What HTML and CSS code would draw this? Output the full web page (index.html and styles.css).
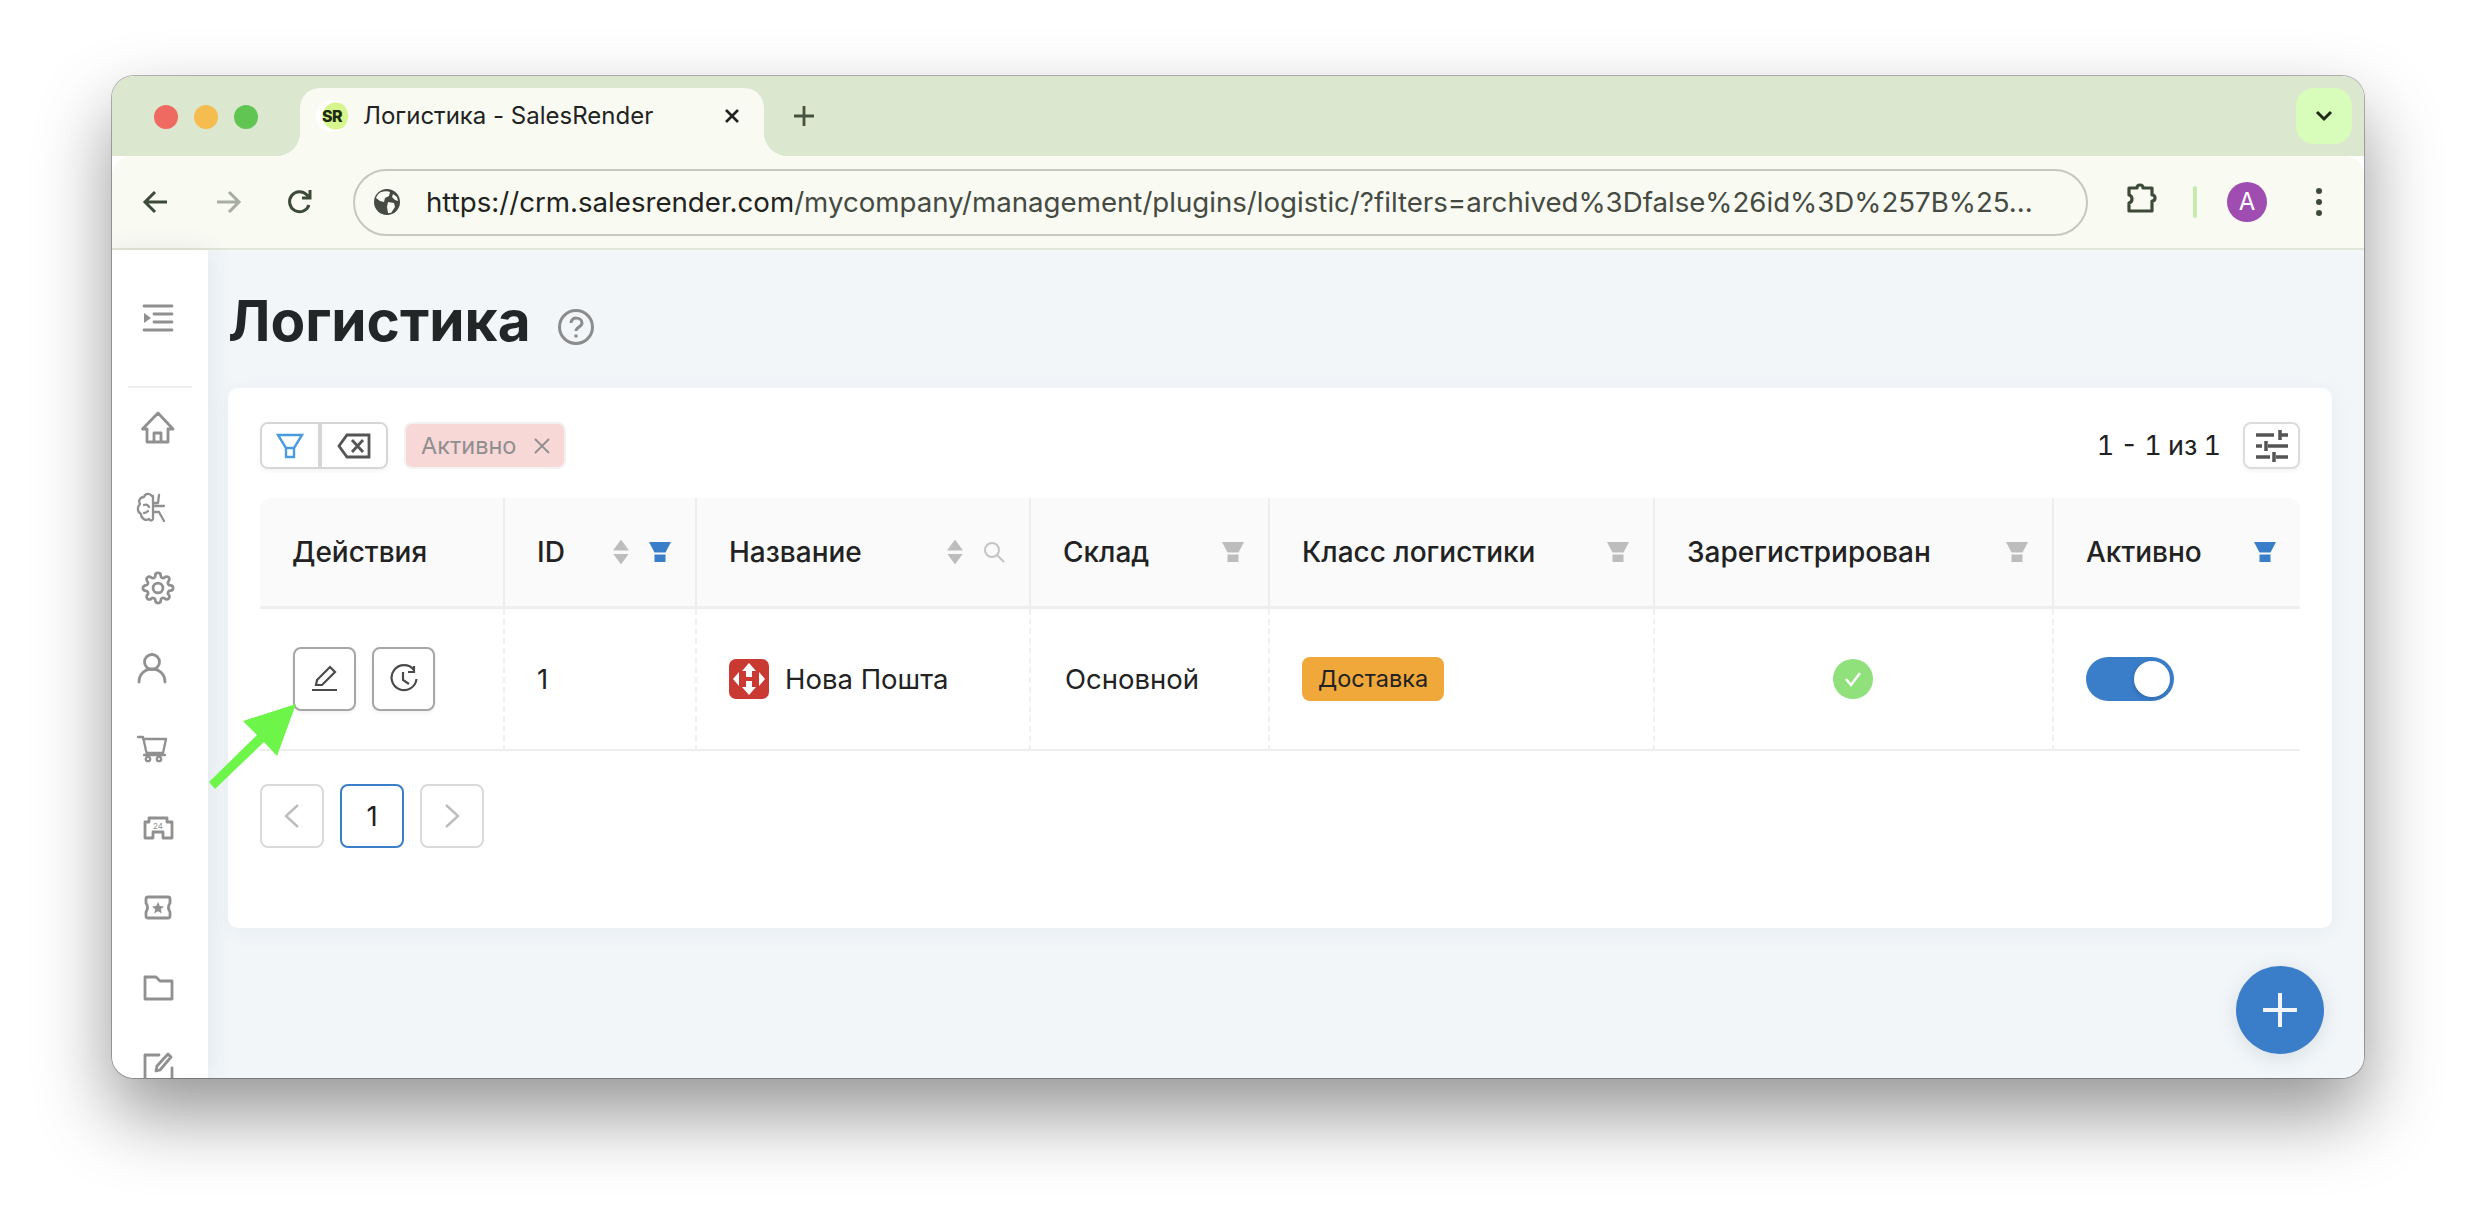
FILE: index.html
```html
<!DOCTYPE html>
<html>
<head>
  <title>Логистика - SalesRender</title>
  <link rel="stylesheet" href="styles.css">
</head>
<body>
  <div class="window">
    <div class="tabStrip">
      <div class="lights">
        <span class="light red"></span>
        <span class="light yellow"></span>
        <span class="light green"></span>
      </div>
      <div class="tab">
        <span class="favicon">SR</span>
        <span class="tabTitle">Логистика - SalesRender</span>
        <svg class="tabClose" width="20" height="20" viewBox="0 0 20 20"><path d="M4 4 L16 16 M16 4 L4 16"/></svg>
      </div>
      <svg class="newTab" width="24" height="24" viewBox="0 0 24 24"><path d="M12 2 V22 M2 12 H22"/></svg>
      <div class="tabMenu">
        <svg width="24" height="24" viewBox="0 0 24 24"><path d="M5 8 L12 15 L19 8"/></svg>
      </div>
    </div>

    <div class="toolbar">
      <svg class="navIcon back" width="32" height="32" viewBox="0 0 32 32"><path d="M27 16 H5 M15 6 L5 16 L15 26"/></svg>
      <svg class="navIcon forward" width="32" height="32" viewBox="0 0 32 32"><path d="M5 16 H27 M17 6 L27 16 L17 26"/></svg>
      <svg class="navIcon reload" width="32" height="32" viewBox="0 0 32 32"><path d="M25 19 A10 10 0 1 1 23 9 L26 12 M26 4 V12 H18"/></svg>
      <div class="addressBar">
        <svg class="globe" width="28" height="28" viewBox="0 0 28 28">
          <circle cx="14" cy="14" r="13" fill="#454a42"/>
          <path d="M8 4 C11 3 15 3 17 4 L16 8 L12 10 L11 14 L7 13 L3 10 C4 7 6 5 8 4 Z M15 14 L21 15 L22 19 L18 25 L15 25 L14 19 Z M20 6 L24 9 L25 13 L22 12 L19 9 Z" fill="#f9faf2"/>
        </svg>
        <span class="url"><span class="urlHost">https://crm.salesrender.com</span>/mycompany/management/plugins/logistic/?filters=archived%3Dfalse%26id%3D%257B%25...</span>
      </div>
      <svg class="puzzle" width="36" height="36" viewBox="0 0 36 36"><path d="M5 6 H13 C13 2 19 2 19 6 H28 V13 C32 13 32 19 28 19 V29 H5 V21 C9 20 9 14 5 13 Z"/></svg>
      <span class="toolbarSep"></span>
      <span class="avatar">A</span>
      <div class="kebab"><span></span><span></span><span></span></div>
    </div>

    <div class="main">
      <div class="sidebar">
        <div class="sideToggle">
          <svg width="48" height="48" viewBox="0 0 48 48" class="sideIcon"><path d="M10 12 H38 M20 20 H38 M20 28 H38 M10 36 H38"/><path class="solid" d="M10 19 L17 24 L10 29 Z"/></svg>
        </div>
        <div class="sideItem"><svg width="48" height="48" viewBox="0 0 48 48" class="sideIcon"><path d="M24 9 L8.5 25 H13 V38 H34 V25 H39 Z M20 38 V29 H27 V38"/></svg></div>
        <div class="sideItem"><svg width="48" height="48" viewBox="0 0 48 48" class="sideIcon thin"><path d="M18 12 C16 9 11 9 10 13 C6 13 4 17 6 20 C3 23 3 28 7 30 C7 35 12 37 15 35 C16 37 18 37 19 35 V12 M10 21 C12 20 14 21 15 23 M10 29 C12 29 13 28 14 27 M19 19 L24 19 L25 11 M19 22 H30 M19 28 H25 L30 37"/></svg></div>
        <div class="sideItem"><svg width="48" height="48" viewBox="-5.5 -5.5 35 35" class="sideIcon gear"><circle cx="12" cy="12" r="3.6"/><path d="M19.4 15a1.65 1.65 0 0 0 .33 1.82l.06.06a2 2 0 0 1 0 2.83 2 2 0 0 1-2.83 0l-.06-.06a1.65 1.65 0 0 0-1.82-.33 1.65 1.65 0 0 0-1 1.51V21a2 2 0 0 1-2 2 2 2 0 0 1-2-2v-.09A1.65 1.65 0 0 0 9 19.4a1.65 1.65 0 0 0-1.82.33l-.06.06a2 2 0 0 1-2.83 0 2 2 0 0 1 0-2.83l.06-.06a1.65 1.65 0 0 0 .33-1.82 1.65 1.65 0 0 0-1.51-1H3a2 2 0 0 1-2-2 2 2 0 0 1 2-2h.09A1.65 1.65 0 0 0 4.6 9a1.65 1.65 0 0 0-.33-1.82l-.06-.06a2 2 0 0 1 0-2.83 2 2 0 0 1 2.83 0l.06.06a1.65 1.65 0 0 0 1.82.33H9a1.65 1.65 0 0 0 1-1.51V3a2 2 0 0 1 2-2 2 2 0 0 1 2 2v.09a1.65 1.65 0 0 0 1 1.51 1.65 1.65 0 0 0 1.82-.33l.06-.06a2 2 0 0 1 2.83 0 2 2 0 0 1 0 2.83l-.06.06a1.65 1.65 0 0 0-.33 1.82V9a1.65 1.65 0 0 0 1.51 1H21a2 2 0 0 1 2 2 2 2 0 0 1-2 2h-.09a1.65 1.65 0 0 0-1.51 1z"/></svg></div>
        <div class="sideItem"><svg width="48" height="48" viewBox="0 0 48 48" class="sideIcon"><circle cx="18" cy="18" r="7.5"/><path d="M5 38 C5 30 11 25 18 25 C25 25 31 30 31 38"/></svg></div>
        <div class="sideItem"><svg width="48" height="48" viewBox="0 0 48 48" class="sideIcon thin"><path d="M4 13 H9 L13 31 M10 31 H31 M9 15 H32 L29 29 H13"/><circle cx="14" cy="35" r="2.2"/><circle cx="25" cy="35" r="2.2"/></svg></div>
        <div class="sideItem"><svg width="48" height="48" viewBox="0 0 48 48" class="sideIcon"><path d="M15 14 H33 V18 H38 V34 H29 V28 H19 V34 H11 V18 H15 Z"/><text class="iconText" x="24" y="24.5">24</text></svg></div>
        <div class="sideItem"><svg width="48" height="48" viewBox="0 0 48 48" class="sideIcon"><path d="M14 13 H34 a2 2 0 0 1 2 2 V19 Q33 23.5 36 28 V32 a2 2 0 0 1 -2 2 H14 a2 2 0 0 1 -2 -2 V28 Q15 23.5 12 19 V15 a2 2 0 0 1 2 -2 Z"/><path class="solid" d="M24 18 L25.8 22 L30 22.4 L26.8 25.2 L27.8 29.5 L24 27.2 L20.2 29.5 L21.2 25.2 L18 22.4 L22.2 22 Z"/></svg></div>
        <div class="sideItem"><svg width="48" height="48" viewBox="0 0 48 48" class="sideIcon"><path d="M11 13 H22 L26 17 H38 V35 H11 Z"/></svg></div>
        <div class="sideItem"><svg width="48" height="48" viewBox="0 0 48 48" class="sideIcon"><path d="M25 11 H11 V38 H38 V24 M26 26 L37 13 L34 10 L23 22 L22 27 Z"/></svg></div>
      </div>

      <div class="content">
        <div class="pageHead">
          <h1>Логистика</h1>
          <svg class="help" width="38" height="38" viewBox="0 0 38 38">
            <circle cx="19" cy="19" r="16.5"/>
            <path d="M14 15 C14 8 25 9 25 15 C25 19 19 19 19 23"/>
            <circle class="dot" cx="19" cy="28" r="1.8"/>
          </svg>
        </div>

        <div class="card">
          <div class="cardTop">
            <div class="filterGroup">
              <button class="filterBtn">
                <svg width="30" height="30" viewBox="0 0 30 30"><path d="M3 4 H27 L19 17 V26 H11 V17 Z M11 17 H19"/></svg>
              </button>
              <button class="filterBtn clear">
                <svg width="34" height="26" viewBox="0 0 34 26"><path d="M10 2 H32 V24 H10 L2 13 Z M15 7 L26 19 M26 7 L15 19"/></svg>
              </button>
            </div>
            <div class="filterTag">
              <span>Активно</span>
              <svg width="18" height="18" viewBox="0 0 18 18"><path d="M2 2 L16 16 M16 2 L2 16"/></svg>
            </div>
            <div class="counter">1 - 1 из 1</div>
            <button class="columnsBtn">
              <svg width="34" height="34" viewBox="0 0 34 34"><path d="M1 6 H19 M25 6 H33 M25 1 V11 M1 17 H7 M13 17 H33 M11 12 V22 M1 28 H15 M21 28 H33 M19 23 V33"/></svg>
            </button>
          </div>

          <table class="grid">
            <thead>
              <tr>
                <th class="colActions"><div class="thIn"><span>Действия</span></div></th>
                <th class="colId"><div class="thIn"><span>ID</span><i class="thTools"><i class="sort"></i><i class="funnel on"></i></i></div></th>
                <th class="colName"><div class="thIn"><span>Название</span><i class="thTools"><i class="sort"></i>
                  <svg class="search" width="22" height="22" viewBox="0 0 22 22"><circle cx="9" cy="9" r="7"/><path d="M14 14 L21 21"/></svg></i></div></th>
                <th class="colStore"><div class="thIn"><span>Склад</span><i class="funnel"></i></div></th>
                <th class="colClass"><div class="thIn"><span>Класс логистики</span><i class="funnel"></i></div></th>
                <th class="colReg"><div class="thIn"><span>Зарегистрирован</span><i class="funnel"></i></div></th>
                <th class="colActive"><div class="thIn"><span>Активно</span><i class="funnel on"></i></div></th>
              </tr>
            </thead>
            <tbody>
              <tr>
                <td class="actionsCell">
                  <div class="actions">
                    <button class="actionBtn">
                      <svg width="28" height="28" viewBox="0 0 28 28"><path d="M1 25 H26 M5 20 L6 15 L19 2 L24 7 L11 20 Z"/></svg>
                    </button>
                    <button class="actionBtn">
                      <svg width="30" height="30" viewBox="0 0 30 30"><path d="M25 6 A12.5 12.5 0 1 0 27.5 15 M25 2 V8 H19 M14 8 V16 L20 20"/></svg>
                    </button>
                  </div>
                </td>
                <td>1</td>
                <td>
                  <div class="nameCell">
                    <svg class="novaLogo" width="40" height="40" viewBox="0 0 40 40">
                      <rect width="40" height="40" rx="7" fill="#c93a33"/>
                      <path d="M20 4 L27 12 H23 V18 H17 V12 H13 Z M20 36 L13 28 H17 V22 H23 V28 H27 Z M4 20 L10 13 V27 Z M36 20 L30 13 V27 Z" fill="#fff"/>
                    </svg>
                    Нова Пошта
                  </div>
                </td>
                <td class="storeCell">Основной</td>
                <td><span class="classTag">Доставка</span></td>
                <td class="regCell">
                  <svg width="40" height="40" viewBox="0 0 40 40"><circle cx="20" cy="20" r="20" fill="#90e07c"/><path d="M13 20 L18 26 L27 14" fill="none" stroke="#fff" stroke-width="2.5"/></svg>
                </td>
                <td><span class="toggle"><span class="knob"></span></span></td>
              </tr>
            </tbody>
          </table>

          <div class="pager">
            <button class="pageBtn">
              <svg width="18" height="28" viewBox="0 0 18 28"><path d="M15 3 L3 14 L15 25"/></svg>
            </button>
            <button class="pageBtn current">1</button>
            <button class="pageBtn">
              <svg width="18" height="28" viewBox="0 0 18 28"><path d="M3 3 L15 14 L3 25"/></svg>
            </button>
          </div>
        </div>

        <button class="fab">
          <svg width="36" height="36" viewBox="0 0 36 36"><path d="M18 1 V35 M1 18 H35"/></svg>
        </button>
      </div>
    </div>

    <svg class="pointer" width="100" height="100" viewBox="0 0 100 100"><path d="M92 3 L39 20 L53 34 L5 81 L11 88 L60 41 L73 55 Z"/></svg>
  </div>
</body>
</html>
```

FILE: styles.css
```css
* {
  box-sizing: border-box;
}

html, body {
  margin: 0;
  height: 100%;
}

body {
  background: #fff;
  padding: 76px 112px 148px;
  font-family: Inter, "Noto Sans", sans-serif;
  color: #222;
  overflow: hidden;
}

button {
  font-family: inherit;
  background: #fff;
  padding: 0;
}

.window {
  position: relative;
  height: 1002px;
  display: flex;
  flex-direction: column;
  border-radius: 22px;
  overflow: hidden;
}

/* outer shadow sits on a wrapper-free pseudo layer */
body::before {
  content: "";
  position: absolute;
  left: 112px;
  top: 76px;
  width: 2252px;
  height: 1002px;
  border-radius: 22px;
  box-shadow: 0 0 0 1px rgba(0, 0, 0, 0.28), 0 36px 75px rgba(0, 0, 0, 0.42);
}

/* tab strip */
.tabStrip {
  height: 80px;
  flex: none;
  display: flex;
  background: #dce7d0;
  padding-top: 12px;
  position: relative;
}

.lights {
  width: 188px;
  display: flex;
  gap: 16px;
  padding: 17px 0 0 42px;
}

.light {
  width: 24px;
  height: 24px;
  border-radius: 50%;
}

.red { background: #ef6a60; }
.yellow { background: #f5bd4f; }
.green { background: #61c554; }

.tab {
  position: relative;
  width: 464px;
  height: 68px;
  background: #f9faf2;
  border-radius: 20px 20px 0 0;
  display: flex;
  align-items: flex-start;
  padding: 12px 0 0 16px;
}

.tab::before,
.tab::after {
  content: "";
  position: absolute;
  bottom: 0;
  width: 24px;
  height: 24px;
}

.tab::before {
  left: -24px;
  background: radial-gradient(circle at 0 0, transparent 24px, #f9faf2 24.5px);
}

.tab::after {
  right: -24px;
  background: radial-gradient(circle at 100% 0, transparent 24px, #f9faf2 24.5px);
}

.favicon {
  width: 32px;
  height: 32px;
  border-radius: 50%;
  background: radial-gradient(circle at 62% 50%, #d6f58c 0, #d6f58c 13px, #fff 14px);
  font-size: 16px;
  font-weight: 800;
  line-height: 32px;
  text-align: center;
  color: #1c2a12;
  letter-spacing: -0.5px;
}

.tabTitle {
  margin-left: 15px;
  width: 359px;
  font-size: 24px;
  line-height: 32px;
  color: #222;
  white-space: nowrap;
}

.tabClose {
  margin-top: 6px;
  fill: none;
  stroke: #222;
  stroke-width: 2.6;
}

.newTab {
  margin: 16px 0 0 28px;
  fill: none;
  stroke: #46523f;
  stroke-width: 2.8;
}

.tabMenu {
  position: absolute;
  right: 12px;
  top: 12px;
  width: 56px;
  height: 56px;
  border-radius: 18px;
  background: #d8fdbb;
  display: flex;
  align-items: center;
  justify-content: center;
}

.tabMenu svg {
  fill: none;
  stroke: #1e2a18;
  stroke-width: 3;
}

/* address row */
.toolbar {
  height: 94px;
  flex: none;
  display: flex;
  align-items: center;
  background: #f9faf2;
  border-bottom: 2px solid #e2e6d8;
  border-radius: 20px 20px 0 0;
  padding: 0 0 0 28px;
  position: relative;
}

.navIcon {
  fill: none;
  stroke: #3e4a38;
  stroke-width: 3;
  flex: none;
}

.forward {
  margin-left: 40px;
  stroke: #a8ada2;
}

.reload {
  margin-left: 40px;
}

.addressBar {
  width: 1735px;
  height: 67px;
  margin-left: 37px;
  border: 2px solid #c6c8bc;
  border-radius: 34px;
  display: flex;
  align-items: center;
  padding-left: 18px;
  flex: none;
}

.url {
  margin-left: 25px;
  font-size: 27.65px;
  color: #454a42;
  white-space: nowrap;
}

.urlHost {
  color: #1f2320;
}

.puzzle {
  margin-left: 36px;
  margin-top: -4px;
  fill: none;
  stroke: #3e4a38;
  stroke-width: 3.2;
  stroke-linejoin: round;
  flex: none;
}

.toolbarSep {
  width: 4px;
  height: 32px;
  margin-left: 33px;
  border-radius: 2px;
  background: #c4ecaa;
  flex: none;
}

.avatar {
  width: 40px;
  height: 40px;
  margin-left: 30px;
  border-radius: 50%;
  background: #9f4db0;
  color: #fff;
  font-size: 24px;
  line-height: 40px;
  text-align: center;
  flex: none;
}

.kebab {
  margin-left: 49px;
  display: flex;
  flex-direction: column;
  gap: 5px;
}

.kebab span {
  width: 6px;
  height: 6px;
  border-radius: 50%;
  background: #3e4a38;
}

/* page */
.main {
  flex: 1;
  min-height: 0;
  display: flex;
}

.sidebar {
  width: 96px;
  flex: none;
  background: #fff;
  box-shadow: 0 0 24px rgba(60, 80, 100, 0.1);
  overflow: hidden;
  position: relative;
  z-index: 1;
}

.sideToggle {
  height: 138px;
  padding: 44px 0 0 22px;
  position: relative;
}

.sideToggle::after {
  content: "";
  position: absolute;
  left: 16px;
  width: 64px;
  bottom: 0;
  height: 2px;
  background: #eee;
}

.sideItem {
  height: 80px;
  padding: 16px 0 0 22px;
}

.sideIcon {
  display: block;
  fill: none;
  stroke: #909090;
  stroke-width: 2.8;
  stroke-linecap: round;
  stroke-linejoin: round;
}

.sideIcon .solid {
  fill: #909090;
  stroke: none;
}

.sideIcon.thin {
  stroke-width: 2.3;
}

.iconText {
  font-size: 8px;
  fill: #909090;
  stroke: none;
  text-anchor: middle;
}

.gear {
  stroke-width: 2;
}

.content {
  flex: 1;
  min-width: 0;
  position: relative;
  background: #f2f6f9;
  padding: 0 32px 0 20px;
}

.pageHead {
  height: 138px;
  display: flex;
  align-items: center;
  padding-top: 2px;
}

h1 {
  margin: 0;
  font-size: 56.7px;
  font-weight: 700;
  color: #232626;
}

.help {
  margin: 14px 0 0 26px;
  fill: none;
  stroke: #8c8c8c;
  stroke-width: 3;
}

.help .dot {
  fill: #8c8c8c;
  stroke: none;
}

.card {
  height: 540px;
  background: #fff;
  border-radius: 10px;
  padding: 34px 32px 0;
  box-shadow: 0 4px 20px rgba(60, 80, 100, 0.06);
}

.cardTop {
  height: 47px;
  display: flex;
  align-items: center;
  margin-bottom: 29px;
}

.filterGroup {
  width: 128px;
  height: 47px;
  display: flex;
  border: 2px solid #d6d6d6;
  border-radius: 8px;
  overflow: hidden;
  box-shadow: 0 2px 4px rgba(0, 0, 0, 0.05);
}

.filterBtn {
  width: 60px;
  border: 0;
  border-right: 4px solid #d6d6d6;
  display: flex;
  align-items: center;
  justify-content: center;
}

.filterBtn svg {
  fill: none;
  stroke: #4a9ae0;
  stroke-width: 2.4;
}

.filterBtn.clear {
  flex: 1;
  border-right: 0;
}

.clear svg {
  stroke: #555;
  stroke-width: 2.8;
}

.filterTag {
  width: 162px;
  height: 47px;
  margin-left: 16px;
  display: flex;
  align-items: center;
  gap: 17px;
  padding-left: 15px;
  background: #f8d7d7;
  border: 2px solid #f4f1f1;
  border-radius: 8px;
  font-size: 23.5px;
  color: #8f8f8f;
}

.filterTag svg {
  fill: none;
  stroke: #8f8f8f;
  stroke-width: 1.8;
}

.counter {
  margin-left: auto;
  font-size: 27px;
  font-variant-numeric: tabular-nums;
  word-spacing: -1px;
  color: #222;
}

.columnsBtn {
  width: 57px;
  height: 47px;
  margin-left: 22px;
  border: 2px solid #dcdcdc;
  border-radius: 8px;
  display: flex;
  align-items: center;
  justify-content: center;
  box-shadow: 0 2px 4px rgba(0, 0, 0, 0.05);
}

.columnsBtn svg {
  fill: none;
  stroke: #555;
  stroke-width: 3.5;
}

.grid {
  width: 2040px;
  table-layout: fixed;
  border-collapse: separate;
  border-spacing: 0;
  font-size: 27.5px;
}

.colActions { width: 245px; }
.colId { width: 192px; }
.colName { width: 334px; }
.colStore { width: 239px; }
.colClass { width: 385px; }
.colReg { width: 399px; }
.colActive { width: 246px; }

th {
  height: 111px;
  padding: 0;
  background: #fafafa;
  border-right: 2px solid #eee;
  border-bottom: 3px solid #eee;
  font-size: 28px;
  font-weight: 500;
  text-align: left;
  color: #222;
}

th:first-child {
  border-top-left-radius: 10px;
}

th:last-child {
  border-top-right-radius: 10px;
  border-right: 0;
}

.thIn {
  display: flex;
  align-items: center;
  justify-content: space-between;
  padding: 0 24px 0 32px;
}

.thIn span {
  white-space: nowrap;
}

.thTools {
  display: flex;
  align-items: center;
  gap: 20px;
}

.funnel {
  display: block;
  width: 22px;
  height: 20px;
  background: #bdbdbd;
  clip-path: polygon(0 0, 100% 0, 75% 52%, 25% 52%, 25% 62%, 75% 62%, 75% 100%, 25% 100%, 25% 52%);
}

.funnel.on {
  background: #3a7dc9;
}

.sort {
  display: flex;
  flex-direction: column;
  gap: 3px;
  width: 16px;
}

.sort::before,
.sort::after {
  content: "";
  width: 16px;
  height: 11px;
  background: #bdbdbd;
}

.sort::before {
  clip-path: polygon(50% 0, 100% 100%, 0 100%);
}

.sort::after {
  clip-path: polygon(0 0, 100% 0, 50% 100%);
}

.search {
  fill: none;
  stroke: #c4c4c4;
  stroke-width: 2;
}

td {
  height: 142px;
  padding: 0 0 0 32px;
  border-right: 2px dashed #f0f0f0;
  border-bottom: 2px solid #eee;
}

td.actionsCell {
  padding-left: 33px;
}

td:last-child {
  border-right: 0;
}

.actions {
  display: flex;
  gap: 16px;
}

.actionBtn {
  width: 63px;
  height: 64px;
  border: 2px solid #a6a6a6;
  border-radius: 8px;
  display: flex;
  align-items: center;
  justify-content: center;
  box-shadow: 0 2px 4px rgba(0, 0, 0, 0.06);
}

.actionBtn svg {
  fill: none;
  stroke: #4a4a4a;
  stroke-width: 2.2;
}

.nameCell {
  display: flex;
  align-items: center;
  gap: 16px;
  white-space: nowrap;
}

.storeCell {
  padding-left: 34px;
}

.classTag {
  display: inline-block;
  height: 44px;
  padding: 0 16px;
  background: #f0a83a;
  border-radius: 8px;
  font-size: 23.5px;
  line-height: 44px;
  color: #222;
}

.regCell {
  padding: 0 2px 0 0;
  text-align: center;
}

.regCell svg {
  display: block;
  margin: 0 auto;
}

.toggle {
  display: block;
  width: 88px;
  height: 44px;
  border-radius: 22px;
  background: #3a7dc9;
  position: relative;
}

.knob {
  position: absolute;
  right: 4px;
  top: 4px;
  width: 36px;
  height: 36px;
  border-radius: 50%;
  background: #fff;
  box-shadow: -1px 2px 4px rgba(0, 0, 0, 0.15);
}

.pager {
  display: flex;
  gap: 16px;
  margin-top: 33px;
}

.pageBtn {
  width: 64px;
  height: 64px;
  border: 2px solid #dadada;
  border-radius: 8px;
  font-size: 27.5px;
  color: #222;
  display: flex;
  align-items: center;
  justify-content: center;
}

.pageBtn svg {
  fill: none;
  stroke: #bdbdbd;
  stroke-width: 2.4;
}

.pageBtn.current {
  border-color: #3a7dc9;
}

.fab {
  position: absolute;
  right: 40px;
  bottom: 24px;
  width: 88px;
  height: 88px;
  border: 0;
  border-radius: 50%;
  background: #3a7dc9;
  display: flex;
  align-items: center;
  justify-content: center;
  box-shadow: 0 4px 20px rgba(60, 80, 100, 0.14);
}

.fab svg {
  fill: none;
  stroke: #f2f6fa;
  stroke-width: 4;
}

/* annotation arrow over the page */
.pointer {
  position: absolute;
  left: 92px;
  top: 625px;
  z-index: 2;
  fill: #6ef54a;
}
```
